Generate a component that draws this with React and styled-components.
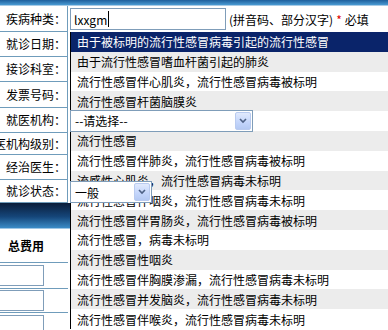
import React from "react";
import styled, { createGlobalStyle } from "styled-components";

const GlobalStyle = createGlobalStyle`
  html, body { margin: 0; padding: 0; background: #ffffff; }
  body { font-family: "Noto Sans CJK SC", "Noto Sans", sans-serif; font-size: 12px; color: #000; }
`;

const Page = styled.div`
  position: relative;
  width: 388px;
  height: 330px;
  overflow: hidden;
  background: #fff;
`;

const TopBand = styled.div`
  height: 5px;
  background: linear-gradient(#1e5f9c, #4a9bd3);
  border-bottom: 1px solid #a8cbe6;
`;

const FormRow = styled.div`
  display: grid;
  grid-template-columns: 68px 1fr;
  height: ${(p) => p.$h}px;
`;

const Label = styled.div`
  display: flex;
  justify-content: flex-end;
  align-items: center;
  overflow: hidden;
  white-space: nowrap;
  padding-right: 1px;
  border-right: 1px solid #6f9cbb;
  border-bottom: 1px solid #6f9cbb;
  font-size: 12px;
  line-height: 14px;
`;

const Field = styled.div`
  display: flex;
  align-items: center;
  padding-left: 2px;
  white-space: nowrap;
  overflow: visible;
`;

const TextInput = styled.div`
  position: relative;
  box-sizing: border-box;
  width: 156px;
  height: 22px;
  border: 1px solid #7f9db9;
  background: #fff;
  display: flex;
  align-items: center;
  padding-left: 3px;
  font-size: 12px;
`;

const Caret = styled.span`
  display: inline-block;
  width: 1px;
  height: 16px;
  background: #000;
  margin-left: 1px;
`;

const Hint = styled.span`
  margin-left: 3px;
  font-size: 12px;
`;

const Star = styled.span`
  color: #e00000;
  margin: 0 3px;
`;

const SelectBox = styled.div`
  position: relative;
  z-index: 20;
  box-sizing: border-box;
  width: ${(p) => p.$w}px;
  height: 22px;
  border: 1px solid #7f9db9;
  background: #fff;
  display: flex;
  align-items: center;
  justify-content: space-between;
  padding: 1px;
  font-size: 12px;
  margin-top: ${(p) => p.$mt || 0}px;
`;

const SelectText = styled.span`
  padding-left: 3px;
`;

const SelectButton = styled.div`
  box-sizing: border-box;
  width: 16px;
  height: 18px;
  border: 1px solid #b9cbf0;
  border-radius: 2px;
  background: linear-gradient(#e1eafd, #c3d5fb 60%, #b4c9f3);
  display: flex;
  align-items: center;
  justify-content: center;
`;

const Band = styled.div`
  height: 25px;
  background: linear-gradient(#0a1d3a, #15467a 55%, #3b8bc6);
  border-bottom: 1px solid #9fc6e4;
`;

const FeeHeader = styled.div`
  width: 68px;
  height: 34px;
  border-bottom: 1px solid #6f9cbb;
  display: flex;
  align-items: center;
  padding-left: 8px;
  box-sizing: border-box;
  font-weight: bold;
  font-size: 12px;
`;

const FeeRow = styled.div`
  width: 68px;
  height: ${(p) => p.$h}px;
  border-bottom: 1px solid #6f9cbb;
  display: flex;
  align-items: center;
  box-sizing: border-box;
`;

const FeeBox = styled.div`
  box-sizing: border-box;
  width: 44px;
  height: 21px;
  border: 1px solid #7f9db9;
  border-left: none;
  background: #fff;
`;

const Suggest = styled.div`
  position: absolute;
  left: 70px;
  top: 32px;
  width: 330px;
  z-index: 10;
  border-left: 1px solid #000;
  background: #fff;
`;

const Item = styled.div`
  height: 19.8px;
  display: flex;
  align-items: center;
  padding-left: 6px;
  white-space: nowrap;
  font-size: 12px;
  background: ${(p) => (p.$active ? "#0a246a" : p.$alt ? "#ececec" : "#ffffff")};
  color: ${(p) => (p.$active ? "#ffffff" : "#000")};
`;

const Chevron = () => (
  <svg width="8" height="6" viewBox="0 0 8 6">
    <path d="M1 1 L4 4 L7 1" fill="none" stroke="#4d6185" strokeWidth="1.6" />
  </svg>
);

const suggestions = [
  "由于被标明的流行性感冒病毒引起的流行性感冒",
  "由于流行性感冒嗜血杆菌引起的肺炎",
  "流行性感冒伴心肌炎，流行性感冒病毒被标明",
  "流行性感冒杆菌脑膜炎",
  "流行性感冒伴脑炎",
  "流行性感冒",
  "流行性感冒伴肺炎，流行性感冒病毒被标明",
  "流感性心肌炎，流行性感冒病毒未标明",
  "流行性感冒伴咽炎，流行性感冒病毒未标明",
  "流行性感冒伴胃肠炎，流行性感冒病毒被标明",
  "流行性感冒，病毒未标明",
  "流行性感冒性咽炎",
  "流行性感冒伴胸膜渗漏，流行性感冒病毒未标明",
  "流行性感冒并发脑炎，流行性感冒病毒未标明",
  "流行性感冒伴喉炎，流行性感冒病毒未标明",
];

export default function App() {
  return (
    <Page>
      <GlobalStyle />
      <TopBand />
      <FormRow $h={26}>
        <Label>疾病种类：</Label>
        <Field>
          <TextInput>
            lxxgm<Caret />
          </TextInput>
          <Hint>
            (拼音码、部分汉字)<Star>*</Star>必填
          </Hint>
        </Field>
      </FormRow>
      <FormRow $h={25}>
        <Label>就诊日期：</Label>
        <Field />
      </FormRow>
      <FormRow $h={25}>
        <Label>接诊科室：</Label>
        <Field />
      </FormRow>
      <FormRow $h={26}>
        <Label>发票号码：</Label>
        <Field />
      </FormRow>
      <FormRow $h={25}>
        <Label>就医机构：</Label>
        <Field>
          <SelectBox $w={183}>
            <SelectText>--请选择--</SelectText>
            <SelectButton>
              <Chevron />
            </SelectButton>
          </SelectBox>
        </Field>
      </FormRow>
      <FormRow $h={22}>
        <Label>就医机构级别：</Label>
        <Field />
      </FormRow>
      <FormRow $h={25}>
        <Label>经治医生：</Label>
        <Field />
      </FormRow>
      <FormRow $h={23}>
        <Label>就诊状态：</Label>
        <Field>
          <SelectBox $w={82} $mt={1}>
            <SelectText>一般</SelectText>
            <SelectButton>
              <Chevron />
            </SelectButton>
          </SelectBox>
        </Field>
      </FormRow>
      <Band />
      <FeeHeader>总费用</FeeHeader>
      <FeeRow $h={26}>
        <FeeBox />
      </FeeRow>
      <FeeRow $h={24}>
        <FeeBox />
      </FeeRow>
      <FeeRow $h={26}>
        <FeeBox />
      </FeeRow>
      <Suggest>
        {suggestions.map((s, i) => (
          <Item key={i} $active={i === 0} $alt={i % 2 === 1}>
            {s}
          </Item>
        ))}
      </Suggest>
    </Page>
  );
}
